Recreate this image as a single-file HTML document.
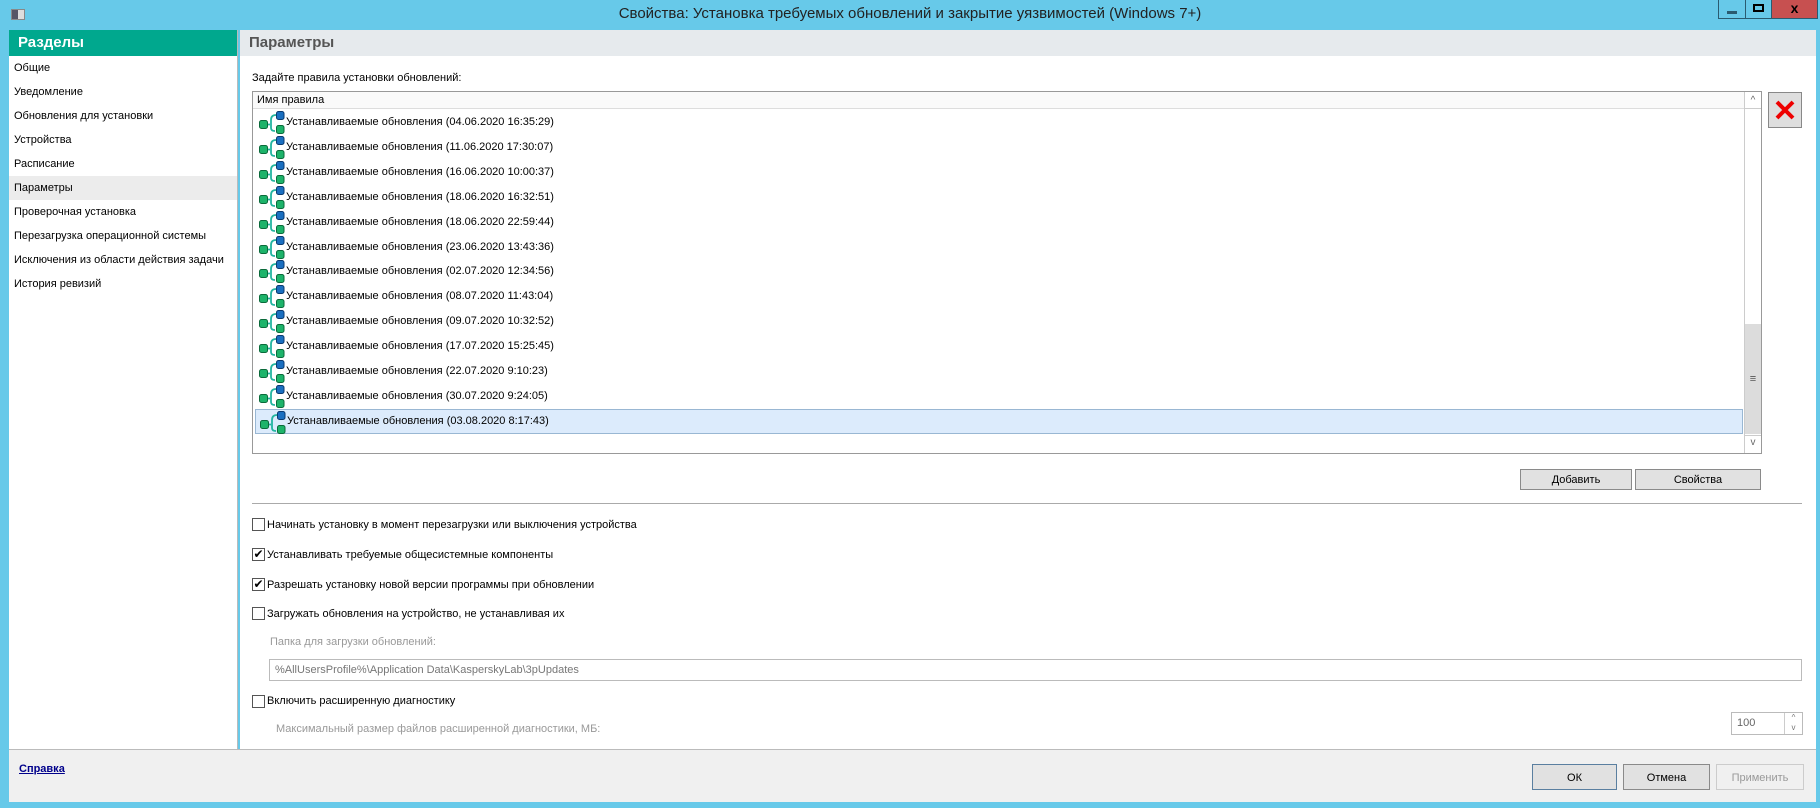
<!DOCTYPE html>
<html><head><meta charset="utf-8"><style>
*{box-sizing:border-box;margin:0;padding:0}
body{width:1820px;height:808px;background:#67c9e9;font-family:"Liberation Sans",sans-serif;font-size:11px;color:#000;position:relative;overflow:hidden}
.abs{position:absolute}
.title{left:0;top:0;width:1820px;height:30px;text-align:center;line-height:28px;font-size:15px;color:#222}
.side{left:9px;top:30px;width:229px;height:720px;background:#fff;border-right:1px solid #bbb}
.sh{height:26px;background:#00a88e;color:#fff;font-weight:bold;font-size:15px;line-height:26px;padding-left:9px}
.si{height:24px;line-height:24px;padding-left:5px;font-size:11px;white-space:nowrap}
.si.sel{background:#ececec}
.main{left:240px;top:30px;width:1576px;height:720px;background:#fff}
.mh{height:26px;background:#e6eaed;color:#555;font-weight:bold;font-size:15px;line-height:26px;padding-left:9px}
.list{left:252px;top:91px;width:1510px;height:363px;border:1px solid #999;background:#fff}
.row{position:absolute;left:2px;height:25px;width:1488px;line-height:25px;padding-left:31px}
.row.sel{background:#dcebfc;border:1px solid #99b7d3;line-height:23px}
.ic{position:absolute;left:4px;top:1px;width:26px;height:23px}
.btn{position:absolute;background:#e1e1e1;border:1px solid #8a8a8a;text-align:center;font-size:11px}
.cb{position:absolute;left:252px;width:13px;height:13px;border:1px solid #555;background:#fff}
.lbl{position:absolute;left:267px;font-size:11px}
</style></head><body>
<div class="abs" style="left:11px;top:9px;width:14px;height:11px;background:#ddd;border:1px solid #888"><div style="width:6px;height:9px;background:#556"></div></div>
<div class="abs title">Свойства: Установка требуемых обновлений и закрытие уязвимостей (Windows 7+)</div>
<div class="abs" style="left:1718px;top:0;width:28px;height:19px;border:1px solid #2a5b70;border-top:none"><div style="margin:11px auto 0;width:10px;height:3px;background:#2a5b70"></div></div>
<div class="abs" style="left:1745px;top:0;width:27px;height:19px;border:1px solid #2a5b70;border-top:none;border-left:none"><div style="margin:4px auto 0;width:11px;height:8px;border:2px solid #000"></div></div>
<div class="abs" style="left:1771px;top:0;width:47px;height:19px;background:#c75050;border:1px solid #2a5b70;border-top:none;text-align:center;font-weight:bold;font-size:14px;line-height:17px">x</div>

<div class="abs side">
<div class="sh">Разделы</div>
<div class="si">Общие</div>
<div class="si">Уведомление</div>
<div class="si">Обновления для установки</div>
<div class="si">Устройства</div>
<div class="si">Расписание</div>
<div class="si sel">Параметры</div>
<div class="si">Проверочная установка</div>
<div class="si">Перезагрузка операционной системы</div>
<div class="si">Исключения из области действия задачи</div>
<div class="si">История ревизий</div>
</div>

<div class="abs main"><div class="mh">Параметры</div></div>
<div class="abs" style="left:252px;top:72px">Задайте правила установки обновлений:</div>
<div class="abs list">
<div class="abs" style="left:0;top:0;width:1491px;height:17px;background:#fafafa;border-bottom:1px solid #ddd;padding-left:4px;line-height:17px">Имя правила</div>
<div class="abs" style="left:1491px;top:0;width:17px;height:361px;background:#fff;border-left:1px solid #ccc">
<div style="height:17px;border-bottom:1px solid #ccc;text-align:center;color:#666;font-size:10px;line-height:17px">^</div>
<div class="abs" style="left:0;top:232px;width:16px;height:110px;background:#dcdcdc;text-align:center;line-height:110px;color:#555">≡</div>
<div class="abs" style="left:0;top:343px;width:16px;height:17px;border-top:1px solid #ccc;text-align:center;color:#666;font-size:10px;line-height:14px">v</div>
</div>
<div id="rows"></div>
</div>
<div class="abs" style="left:1768px;top:92px;width:34px;height:36px;background:#dedede;border:1px solid #888">
<svg width="32" height="34"><path d="M8 9L24 25M24 9L8 25" stroke="#e00" stroke-width="4"/></svg></div>
<div class="btn" style="left:1520px;top:469px;width:112px;height:21px;line-height:21px">Добавить</div>
<div class="btn" style="left:1635px;top:469px;width:126px;height:21px;line-height:21px">Свойства</div>
<div class="abs" style="left:252px;top:503px;width:1550px;height:1px;background:#aaa"></div>

<div class="cb" style="top:518px"></div><div class="lbl" style="top:519px">Начинать установку в момент перезагрузки или выключения устройства</div>
<div class="cb" style="top:548px;font-size:12px;line-height:11px;text-align:center">✔</div><div class="lbl" style="top:549px">Устанавливать требуемые общесистемные компоненты</div>
<div class="cb" style="top:578px;font-size:12px;line-height:11px;text-align:center">✔</div><div class="lbl" style="top:579px">Разрешать установку новой версии программы при обновлении</div>
<div class="cb" style="top:607px"></div><div class="lbl" style="top:608px">Загружать обновления на устройство, не устанавливая их</div>
<div class="abs" style="left:270px;top:636px;color:#999">Папка для загрузки обновлений:</div>
<div class="abs" style="left:269px;top:659px;width:1533px;height:22px;border:1px solid #bbb;color:#777;line-height:20px;padding-left:5px">%AllUsersProfile%\Application Data\KasperskyLab\3pUpdates</div>
<div class="cb" style="top:695px"></div><div class="lbl" style="top:695px">Включить расширенную диагностику</div>
<div class="abs" style="left:276px;top:723px;color:#999">Максимальный размер файлов расширенной диагностики, МБ:</div>
<div class="abs" style="left:1731px;top:712px;width:72px;height:23px;border:1px solid #bbb;color:#666;line-height:21px;padding-left:5px">100
<div class="abs" style="right:0;top:0;width:18px;height:21px;border-left:1px solid #ccc;font-size:8px;color:#777;text-align:center;line-height:10px">^<br>v</div></div>

<div class="abs" style="left:9px;top:749px;width:1807px;height:53px;background:#f0f0f0;border-top:1px solid #bbb"></div>
<div class="abs" style="left:19px;top:763px;color:#00008b;font-weight:bold;text-decoration:underline">Справка</div>
<div class="btn" style="left:1532px;top:764px;width:85px;height:26px;line-height:26px;border-color:#5a7fa0">ОК</div>
<div class="btn" style="left:1623px;top:764px;width:87px;height:26px;line-height:26px">Отмена</div>
<div class="btn" style="left:1716px;top:764px;width:88px;height:26px;line-height:26px;background:#f0f0f0;border-color:#ccc;color:#999">Применить</div>

<script>
var d=["04.06.2020 16:35:29","11.06.2020 17:30:07","16.06.2020 10:00:37","18.06.2020 16:32:51","18.06.2020 22:59:44","23.06.2020 13:43:36","02.07.2020 12:34:56","08.07.2020 11:43:04","09.07.2020 10:32:52","17.07.2020 15:25:45","22.07.2020 9:10:23","30.07.2020 9:24:05","03.08.2020 8:17:43"];
var h="";
var ic='<svg class="ic" viewBox="0 0 26 23"><rect x="0.5" y="9.5" width="8" height="8" rx="2" fill="#1db36a" stroke="#0a6a3a"/><path d="M9 13.5H11M17 4Q12 4 12 9V17Q12 20 16 20" stroke="#22b5a0" stroke-width="1.8" fill="none"/><rect x="17.5" y="0.5" width="7.5" height="8" rx="2" fill="#1a6fc0" stroke="#0a3a70"/><rect x="17.5" y="14.5" width="7.5" height="8" rx="2" fill="#1db36a" stroke="#0a6a3a"/></svg>';
for(var i=0;i<d.length;i++){h+='<div class="row'+(i==12?' sel':'')+'" style="top:'+(18+i*24.9)+'px">'+ic+'Устанавливаемые обновления ('+d[i]+')</div>';}
document.getElementById("rows").innerHTML=h;
</script>
</body></html>
